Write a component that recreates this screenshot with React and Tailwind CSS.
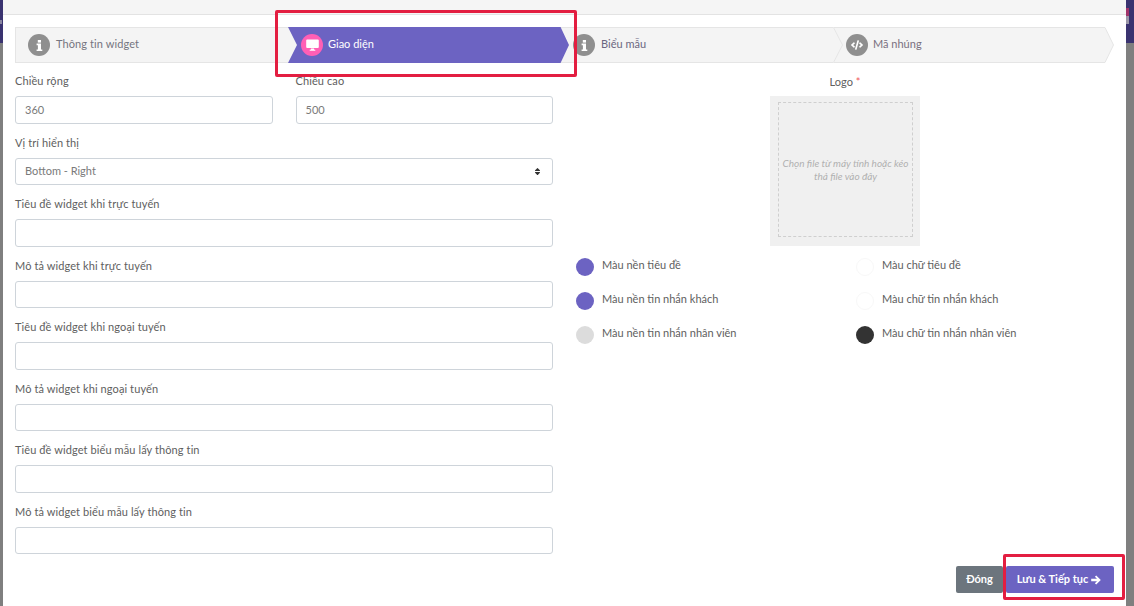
import React from "react";
import { FaCode, FaSort } from "react-icons/fa";

const fields = [
  "Tiêu đề widget khi trực tuyến",
  "Mô tả widget khi trực tuyến",
  "Tiêu đề widget khi ngoại tuyến",
  "Mô tả widget khi ngoại tuyến",
  "Tiêu đề widget biểu mẫu lấy thông tin",
  "Mô tả widget biểu mẫu lấy thông tin",
];

function InfoIcon() {
  return (
    <svg width="7" height="11" viewBox="0 0 7 11" fill="currentColor">
      <path d="M1.8 0h3.2v2.6H1.8z" />
      <path d="M0.6 3.6h4.4v5.8h1.3V11H0.6V9.4h1.3V5.2H0.6z" />
    </svg>
  );
}

function DesktopIcon() {
  return (
    <svg width="13" height="12" viewBox="0 0 13 12" fill="currentColor">
      <path d="M1.2 0.5h10.6a1 1 0 0 1 1 1v6.6a1 1 0 0 1-1 1H1.2a1 1 0 0 1-1-1V1.5a1 1 0 0 1 1-1z" />
      <path d="M5 9.6h3l0.3 1.2h1v0.9H3.7v-0.9h1z" />
    </svg>
  );
}

function ArrowIcon() {
  return (
    <svg width="10" height="10" viewBox="0 0 10 10" fill="currentColor">
      <path d="M5.2 0.4L9.8 5L5.2 9.6L3.9 8.3L6 6.2H0.2V3.8H6L3.9 1.7z" />
    </svg>
  );
}

function Circle({ children, pink }) {
  return (
    <span className={"flex h-[22px] w-[22px] shrink-0 items-center justify-center rounded-full text-white " + (pink ? "bg-[#ff5fb5]" : "bg-[#8f8f8f]")}>
      {children}
    </span>
  );
}

function Field({ label, children }) {
  return (
    <div className="mb-[11px]">
      <div className="mb-[7px] h-4 text-[11px] leading-4 tracking-[0.1px] text-[#606060]">{label}</div>
      {children}
    </div>
  );
}

function Box({ children, className = "" }) {
  return (
    <div className={"flex h-[27.5px] items-center rounded-[3px] border border-[#ced4da] bg-white px-[9px] text-[11px] text-[#7a7a7a] " + className}>
      {children}
    </div>
  );
}

function Swatch({ label, color, border }) {
  return (
    <div className="flex h-[18px] items-center">
      <span className={"h-[18px] w-[18px] shrink-0 rounded-full " + color + (border ? " border border-[#f8f8f8]" : "")} />
      <span className="ml-2 -translate-y-0.5 text-[11px] leading-4 text-[#606060]">{label}</span>
    </div>
  );
}

export default function App() {
  return (
    <div className="relative flex h-[606px] w-[1134px] overflow-hidden bg-[#7f7f7f] font-['Lato',sans-serif]">
      <div className="w-[3px] shrink-0">
        <div className="h-[43px] bg-[#3a3370] pt-5">
          <div className="h-1 w-[2px] bg-[#8a87a0]" />
        </div>
      </div>
      <div className="min-w-0 flex-1 bg-white">
        <div className="h-[15px] border-b border-[#e3e3e3] bg-[#f5f5f5]" />
        <div className="mx-3 mt-3 flex h-9 w-[1099px] text-[11px] leading-[14px]">
          <div className="flex w-[273px] items-center gap-[6px] border border-r-0 border-[#e5e5e5] bg-[#f4f4f4] pl-3">
            <Circle><InfoIcon /></Circle>
            <span className="-translate-y-px tracking-[0.1px] text-[#75757f]">Thông tin widget</span>
          </div>
          <div className="w-[281px] border-y border-[#e5e5e5] bg-[#f4f4f4]">
            <div className="-my-px flex h-9 items-center gap-[5px] bg-[#6c63c2] pl-[13px] text-white [clip-path:polygon(0_0,97%_0,100%_50%,97%_100%,0_100%,3.2%_50%)]">
              <Circle pink><DesktopIcon /></Circle>
              <span className="-translate-y-px">Giao diện</span>
            </div>
          </div>
          <div className="flex w-[264px] items-center gap-[6px] border-y border-[#e5e5e5] bg-[#f4f4f4] pl-[4px]">
            <Circle><InfoIcon /></Circle>
            <span className="-translate-y-px text-[#6a6680]">Biểu mẫu</span>
          </div>
          <div className="relative flex w-[281px] items-center gap-[5px] pl-[13px]">
            <svg className="absolute inset-0 h-9 w-[281px]" viewBox="0 0 281 36" fill="none">
              <polygon points="0,0 10,18 0,36" fill="#f4f4f4" />
              <polygon points="0.5,0.5 272,0.5 280.5,18 272,35.5 0.5,35.5 9.5,18" fill="#f4f4f4" stroke="#e5e5e5" />
            </svg>
            <span className="relative"><Circle><FaCode size={12} /></Circle></span>
            <span className="relative -translate-y-px text-[#7a7080]">Mã nhúng</span>
          </div>
        </div>
        <div className="ml-3 mt-[10px] flex">
          <div className="w-[538px]">
            <div className="flex gap-[23px]">
              <div className="flex-1">
                <Field label="Chiều rộng"><Box>360</Box></Field>
              </div>
              <div className="flex-1">
                <Field label="Chiều cao"><Box>500</Box></Field>
              </div>
            </div>
            <Field label="Vị trí hiển thị">
              <Box className="justify-between pr-[10px]">
                <span>Bottom - Right</span>
                <FaSort size={9} className="text-[#333]" />
              </Box>
            </Field>
            {fields.map((f) => (
              <Field key={f} label={f}><Box /></Field>
            ))}
          </div>
          <div className="ml-[23px] w-[538px]">
            <div className="ml-[194px] w-[150px]">
              <div className="mb-[7px] h-4 translate-y-px text-center text-[11px] leading-4 text-[#606060]">
                Logo <span className="text-[#f05a5a]">*</span>
              </div>
              <div className="h-[150px] w-[150px] bg-[#f0f0f0] pb-[9px] pl-2 pr-[7px] pt-[6px]">
                <div className="flex h-full items-center justify-center border border-dashed border-[#cfcfcf] px-[3px] text-center text-[10px] italic leading-[13px] text-[#b0b0b0]">
                  Chọn file từ máy tính hoặc kéo thả file vào đây
                </div>
              </div>
            </div>
            <div className="mt-3 grid grid-cols-[280px_1fr] gap-y-4">
              <Swatch label="Màu nền tiêu đề" color="bg-[#6c63c2]" />
              <Swatch label="Màu chữ tiêu đề" color="bg-white" border />
              <Swatch label="Màu nền tin nhắn khách" color="bg-[#6c63c2]" />
              <Swatch label="Màu chữ tin nhắn khách" color="bg-white" border />
              <Swatch label="Màu nền tin nhắn nhân viên" color="bg-[#dcdcdc]" />
              <Swatch label="Màu chữ tin nhắn nhân viên" color="bg-[#333333]" />
            </div>
          </div>
        </div>
        <div className="mr-3 mt-[1px] flex justify-end gap-[3px] text-[11px] font-bold text-white">
          <button className="flex h-[27px] w-[47px] items-center justify-center rounded-[2px] bg-[#6c757d]">Đóng</button>
          <button className="flex h-[27px] w-[108px] items-center justify-center gap-[3px] rounded-[2px] bg-[#6c63c2] pr-[2px]">
            Lưu &amp; Tiếp tục <ArrowIcon />
          </button>
        </div>
      </div>
      <div className="w-2 shrink-0">
        <div className="h-[43px] bg-[#3a3370] pt-2">
          <div className="h-2 w-[3px] bg-[#a0336a]" />
          <div className="h-2 w-[3px] bg-[#9a96a8]" />
        </div>
      </div>
      <div className="pointer-events-none absolute left-[275px] top-[10px] h-[67px] w-[302px] rounded-[2px] border-[3px] border-[#e31e41]" />
      <div className="pointer-events-none absolute left-[1003px] top-[554px] h-[46px] w-[122px] rounded-[2px] border-[3px] border-[#e31e41]" />
    </div>
  );
}
